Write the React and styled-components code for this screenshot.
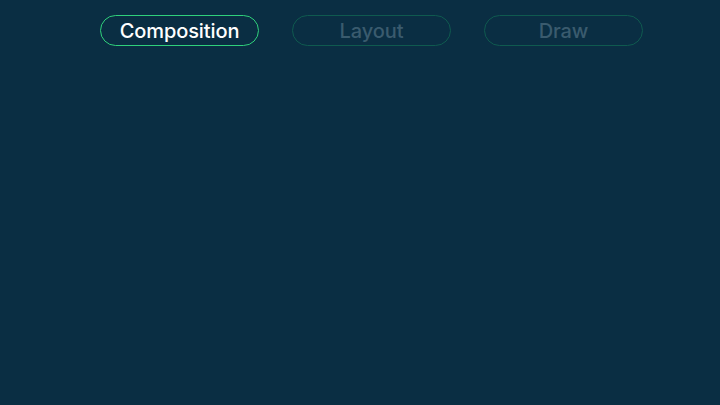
import React, { useState } from "react";
import styled, { createGlobalStyle } from "styled-components";

const GlobalStyle = createGlobalStyle`
  html, body {
    margin: 0;
    padding: 0;
    background: #0a2e43;
  }
  #root {
    min-height: 100vh;
  }
`;

const tabs = ["Composition", "Layout", "Draw"];

const App = () => {
  const [active, setActive] = useState("Composition");

  return (
    <Page>
      <GlobalStyle />
      <TabBar>
        {tabs.map((t) => (
          <Tab key={t} $active={t === active} onClick={() => setActive(t)}>
            {t}
          </Tab>
        ))}
      </TabBar>
    </Page>
  );
};

export default App;

const Page = styled.div`
  width: 720px;
  height: 405px;
  background: #0a2e43;
  overflow: hidden;
`;

const TabBar = styled.nav`
  display: flex;
  gap: 33px;
  padding: 15px 0 0 100px;
`;

const Tab = styled.button`
  width: 159px;
  height: 31px;
  box-sizing: border-box;
  border-radius: 16px;
  background: transparent;
  border: 1.5px solid ${(p) => (p.$active ? "#2fd07b" : "#0f5a4f")};
  color: ${(p) => (p.$active ? "#ffffff" : "#3a5b6e")};
  font-family: Inter, "Liberation Sans", sans-serif;
  font-weight: 550;
  font-size: 20px;
  letter-spacing: -0.1px;
  padding: 0;
  display: flex;
  align-items: center;
  justify-content: center;
  cursor: pointer;
`;
